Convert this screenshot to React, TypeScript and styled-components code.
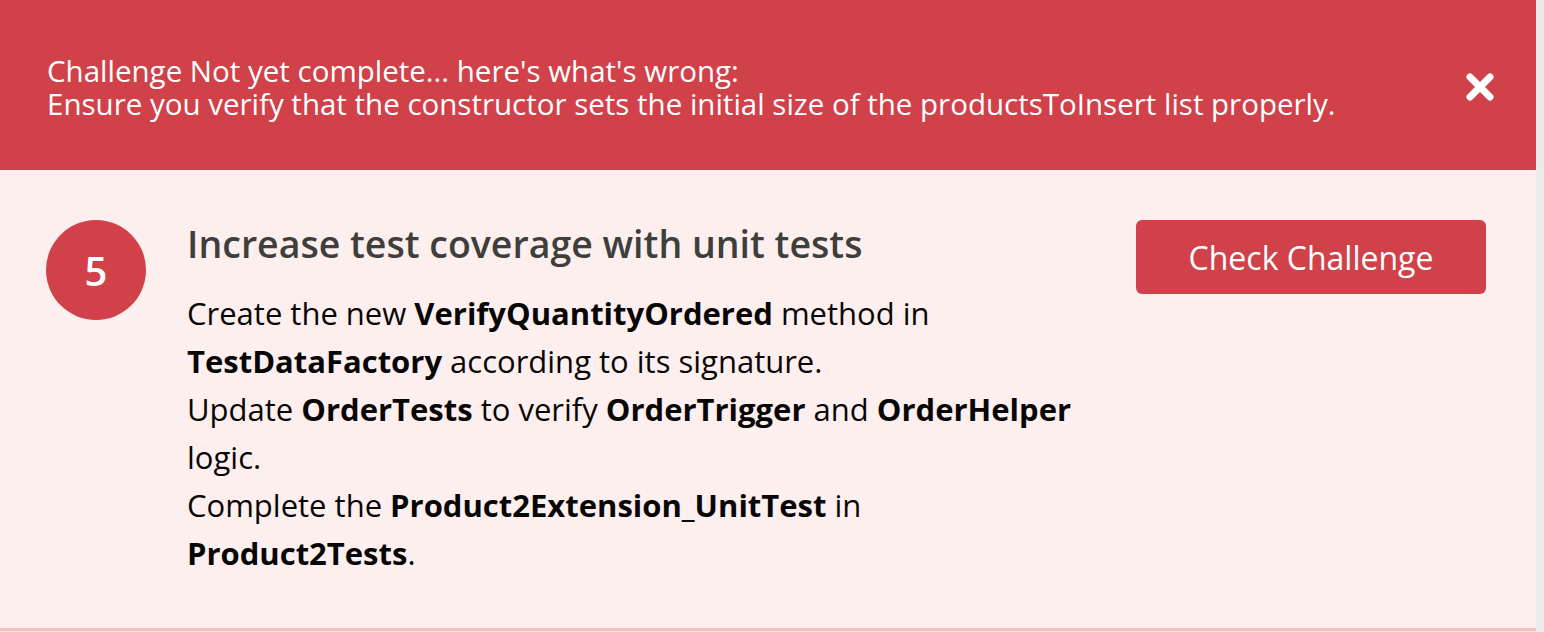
import React from "react";
import styled, { createGlobalStyle } from "styled-components";

const GlobalStyle = createGlobalStyle`
  html, body { margin: 0; padding: 0; }
  body {
    background: #ebebeb;
    font-family: "Open Sans", "Noto Sans", Arial, sans-serif;
    -webkit-font-smoothing: antialiased;
  }
`;

const Page = styled.div`
  width: 1536px;
  display: flex;
  flex-direction: column;
`;

const Banner = styled.div`
  height: 170px;
  box-sizing: border-box;
  background: #d1414a;
  color: #ffffff;
  display: flex;
  align-items: center;
  justify-content: space-between;
  padding: 4px 40px 0 47px;
`;

const BannerText = styled.div`
  display: flex;
  flex-direction: column;
`;

const BannerLine = styled.div`
  font-size: 29.5px;
  line-height: 33px;
  height: 33px;
  font-weight: 400;
  white-space: nowrap;
`;

const CloseButton = styled.button`
  width: 32px;
  height: 32px;
  padding: 0;
  border: none;
  background: transparent;
  display: flex;
  align-items: center;
  justify-content: center;
  cursor: pointer;
`;

const Step = styled.div`
  background: #fdefee;
  border-bottom: 3px solid #f5c0bd;
  padding: 50px 50px 51px 46px;
  display: flex;
  align-items: flex-start;
`;

const Badge = styled.div`
  flex: none;
  width: 100px;
  height: 100px;
  border-radius: 50%;
  background: #d1414a;
  color: #ffffff;
  display: flex;
  align-items: center;
  justify-content: center;
  font-size: 40px;
  font-weight: 600;
`;

const Body = styled.div`
  flex: 1;
  margin-left: 41px;
`;

const Title = styled.h2`
  margin: 2px 0 23px;
  font-size: 37.5px;
  line-height: 44px;
  font-weight: 600;
  color: #3e3e3c;
`;

const Line = styled.div`
  font-size: 31px;
  line-height: 48px;
  color: #080707;
  white-space: nowrap;
  b { font-weight: 700; }
`;

const CheckButton = styled.button`
  flex: none;
  width: 350px;
  height: 74px;
  border: none;
  border-radius: 6px;
  background: #d1414a;
  color: #ffffff;
  font-family: inherit;
  font-size: 32px;
  font-weight: 400;
  cursor: pointer;
`;

export default function App() {
  return (
    <>
      <GlobalStyle />
      <Page>
        <Banner>
          <BannerText>
            <BannerLine>Challenge Not yet complete... here's what's wrong:</BannerLine>
            <BannerLine>
              Ensure you verify that the constructor sets the initial size of the productsToInsert list properly.
            </BannerLine>
          </BannerText>
          <CloseButton aria-label="Close">
            <svg width="30" height="30" viewBox="0 0 30 30">
              <path d="M5 5 L25 25 M25 5 L5 25" stroke="#ffffff" strokeWidth="7" strokeLinecap="round" />
            </svg>
          </CloseButton>
        </Banner>
        <Step>
          <Badge>5</Badge>
          <Body>
            <Title>Increase test coverage with unit tests</Title>
            <Line>
              Create the new <b>VerifyQuantityOrdered</b> method in
            </Line>
            <Line>
              <b>TestDataFactory</b> according to its signature.
            </Line>
            <Line>
              Update <b>OrderTests</b> to verify <b>OrderTrigger</b> and <b>OrderHelper</b>
            </Line>
            <Line>logic.</Line>
            <Line>
              Complete the <b>Product2Extension_UnitTest</b> in
            </Line>
            <Line>
              <b>Product2Tests</b>.
            </Line>
          </Body>
          <CheckButton>Check Challenge</CheckButton>
        </Step>
      </Page>
    </>
  );
}
